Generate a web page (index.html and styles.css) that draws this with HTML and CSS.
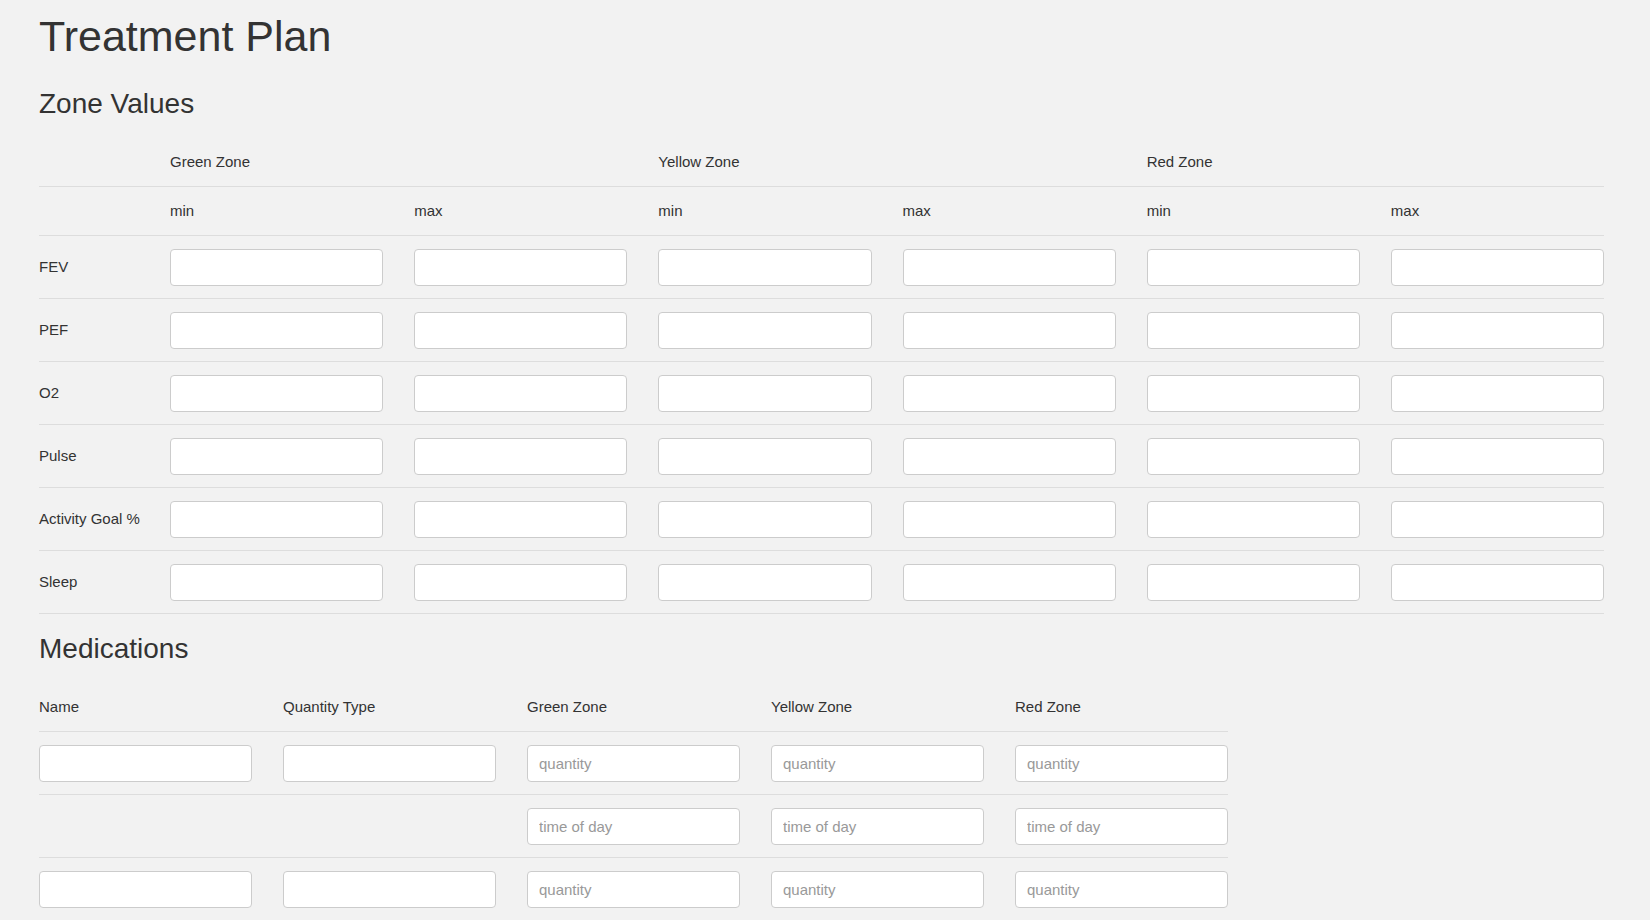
FILE: index.html
```html
<!DOCTYPE html>
<html lang="en">
<head>
<meta charset="utf-8">
<title>Treatment Plan</title>
<link rel="stylesheet" href="styles.css">
</head>
<body>
<main class="page">
  <h1 class="page-title">Treatment Plan</h1>

  <section class="section zones">
    <h2 class="section-title first">Zone Values</h2>
    <div class="zone-table">
      <div class="zone-row head">
        <div class="cell"></div>
        <div class="cell span2">Green Zone</div>
        <div class="cell span2">Yellow Zone</div>
        <div class="cell span2">Red Zone</div>
      </div>
      <div class="zone-row head">
        <div class="cell"></div>
        <div class="cell">min</div>
        <div class="cell">max</div>
        <div class="cell">min</div>
        <div class="cell">max</div>
        <div class="cell">min</div>
        <div class="cell">max</div>
      </div>
      <div class="zone-row data">
        <div class="cell label">FEV</div>
        <input class="field" type="text"><input class="field" type="text"><input class="field" type="text"><input class="field" type="text"><input class="field" type="text"><input class="field" type="text">
      </div>
      <div class="zone-row data">
        <div class="cell label">PEF</div>
        <input class="field" type="text"><input class="field" type="text"><input class="field" type="text"><input class="field" type="text"><input class="field" type="text"><input class="field" type="text">
      </div>
      <div class="zone-row data">
        <div class="cell label">O2</div>
        <input class="field" type="text"><input class="field" type="text"><input class="field" type="text"><input class="field" type="text"><input class="field" type="text"><input class="field" type="text">
      </div>
      <div class="zone-row data">
        <div class="cell label">Pulse</div>
        <input class="field" type="text"><input class="field" type="text"><input class="field" type="text"><input class="field" type="text"><input class="field" type="text"><input class="field" type="text">
      </div>
      <div class="zone-row data">
        <div class="cell label">Activity Goal %</div>
        <input class="field" type="text"><input class="field" type="text"><input class="field" type="text"><input class="field" type="text"><input class="field" type="text"><input class="field" type="text">
      </div>
      <div class="zone-row data">
        <div class="cell label">Sleep</div>
        <input class="field" type="text"><input class="field" type="text"><input class="field" type="text"><input class="field" type="text"><input class="field" type="text"><input class="field" type="text">
      </div>
    </div>
  </section>

  <section class="section meds">
    <h2 class="section-title">Medications</h2>
    <div class="med-table">
      <div class="med-row head">
        <div class="cell">Name</div>
        <div class="cell">Quantity Type</div>
        <div class="cell">Green Zone</div>
        <div class="cell">Yellow Zone</div>
        <div class="cell">Red Zone</div>
      </div>
      <div class="med-row data">
        <input class="field" type="text">
        <input class="field" type="text">
        <input class="field" type="text" placeholder="quantity">
        <input class="field" type="text" placeholder="quantity">
        <input class="field" type="text" placeholder="quantity">
      </div>
      <div class="med-row data">
        <div class="cell"></div>
        <div class="cell"></div>
        <input class="field" type="text" placeholder="time of day">
        <input class="field" type="text" placeholder="time of day">
        <input class="field" type="text" placeholder="time of day">
      </div>
      <div class="med-row data">
        <input class="field" type="text">
        <input class="field" type="text">
        <input class="field" type="text" placeholder="quantity">
        <input class="field" type="text" placeholder="quantity">
        <input class="field" type="text" placeholder="quantity">
      </div>
      <div class="med-row data">
        <div class="cell"></div>
        <div class="cell"></div>
        <input class="field" type="text" placeholder="time of day">
        <input class="field" type="text" placeholder="time of day">
        <input class="field" type="text" placeholder="time of day">
      </div>
    </div>
  </section>
</main>
</body>
</html>
```

FILE: styles.css
```css
* {
  box-sizing: border-box;
}

html, body {
  margin: 0;
  background: #f2f2f2;
}

body {
  font-family: "Liberation Sans", Arial, sans-serif;
  font-size: 15px;
  line-height: 20px;
  color: #333;
}

.page {
  padding: 12px 0 0 39px;
}

.page-title {
  margin: 0;
  font-size: 43px;
  line-height: 48px;
  font-weight: normal;
  color: #333;
}

.section-title {
  margin: 18px 0 17px;
  font-size: 28px;
  line-height: 34px;
  font-weight: normal;
  color: #333;
}

.section-title.first {
  margin-top: 27px;
}

.zone-table {
  width: 1565px;
}

.med-table {
  width: 1189px;
}

.zone-row,
.med-row {
  display: grid;
  column-gap: 31px;
  align-items: center;
  border-bottom: 1px solid #dddddd;
}

.zone-row {
  grid-template-columns: 100px repeat(6, 1fr);
}

.med-row {
  grid-template-columns: repeat(5, 1fr);
}

.head {
  height: 49px;
}

.data {
  height: 63px;
}

.span2 {
  grid-column: span 2;
}

.cell {
  white-space: nowrap;
}

.field {
  display: block;
  width: 100%;
  height: 37px;
  margin: 0;
  padding: 0 11px;
  border: 1px solid #cccccc;
  border-radius: 4px;
  background: #ffffff;
  font-family: "Liberation Sans", Arial, sans-serif;
  font-size: 15px;
  color: #555;
  outline: none;
}

.field::placeholder {
  color: #999999;
}
```
